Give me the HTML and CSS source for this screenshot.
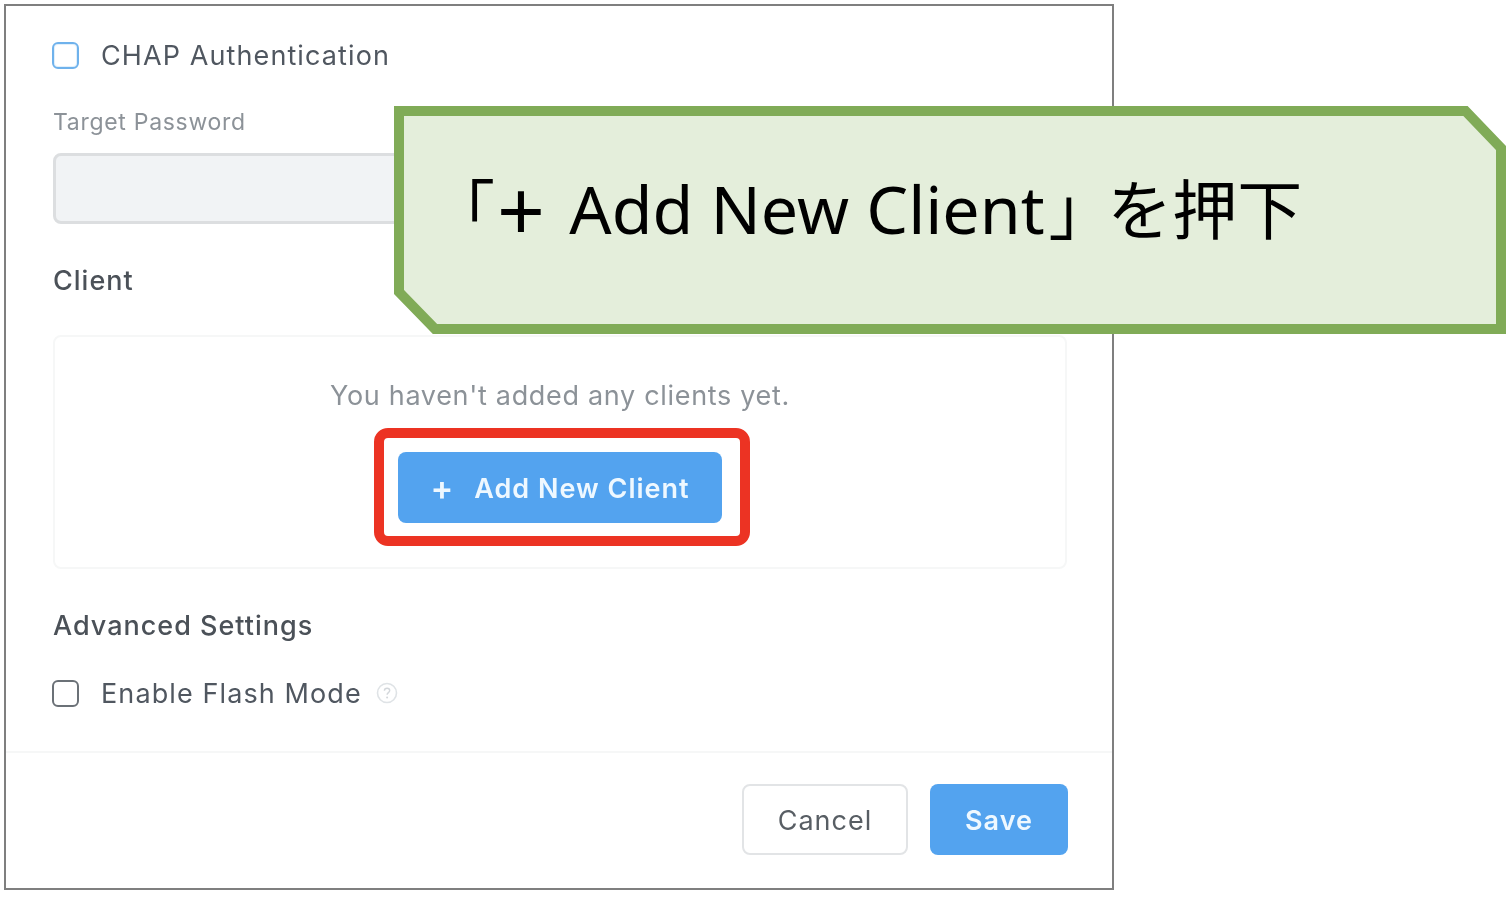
FILE: index.html
```html
<!DOCTYPE html>
<html lang="ja">
<head>
<meta charset="utf-8">
<title>Add New Client</title>
<link rel="stylesheet" href="styles.css">
</head>
<body>
<main class="panel">
  <div class="form">
    <label class="check-row">
      <span class="box box-focus"></span>
      <span class="check-label">CHAP Authentication</span>
    </label>
    <div class="field-label">Target Password</div>
    <div class="input"></div>
    <div class="section-title client-title">Client</div>
    <div class="client-card">
      <p class="empty">You haven't added any clients yet.</p>
      <div class="highlight">
        <button class="btn btn-primary btn-add"><span class="plus">+</span><span class="btn-text">Add New Client</span></button>
      </div>
    </div>
    <div class="section-title adv-title">Advanced Settings</div>
    <label class="check-row flash-row">
      <span class="box"></span>
      <span class="check-label">Enable Flash Mode</span>
      <svg class="help" viewBox="0 0 22 22" width="22" height="22" aria-hidden="true">
        <circle cx="11" cy="11" r="9.5" fill="none" stroke="#dfe3e6" stroke-width="1.6"/>
        <path d="M8.4 8.8c0-1.5 1.2-2.5 2.7-2.5s2.6 1 2.6 2.3c0 2.1-2.6 2-2.6 4.2" fill="none" stroke="#d3d7db" stroke-width="1.4"/>
        <circle cx="11.1" cy="15.6" r="1" fill="#d3d7db"/>
      </svg>
    </label>
  </div>
  <footer class="footer">
    <button class="btn btn-cancel"><span class="btn-text">Cancel</span></button>
    <button class="btn btn-primary btn-save"><span class="btn-text">Save</span></button>
  </footer>
  <aside class="callout">
    <svg class="callout-shape" viewBox="0 0 1112 228" width="1112" height="228" aria-hidden="true">
      <polygon points="5,5 1071.5,5 1107,42 1107,223 41,223 5,186" fill="#e4eedb" stroke="#80ab57" stroke-width="10"/>
    </svg>
    <p class="callout-text"><span class="bracket-open">「</span><span class="plus-big">+</span><span class="latin"> Add New Client</span><span class="bracket-close">」</span><span class="cjk">を押下</span></p>
  </aside>
</main>
</body>
</html>
```
FILE: styles.css
```css
* { box-sizing: border-box; }
html, body { margin: 0; padding: 0; background: #fff; }
body { width: 1512px; height: 898px; overflow: hidden; font-family: Inter, "Open Sans", sans-serif; }
.panel {
  position: relative;
  width: 1110px;
  height: 886px;
  margin: 4px 0 0 4px;
  border: 2px solid #7f7f7f;
  display: flex;
  flex-direction: column;
  justify-content: space-between;
}
.form { padding: 33px 45px 0 47px; display: flex; flex-direction: column; align-items: flex-start; }
.check-row { display: flex; align-items: center; height: 32px; color: #505760; font-size: 27px; letter-spacing: 1.1px; }
.box { width: 27px; height: 27px; margin-left: -1px; border: 2px solid #6b7177; border-radius: 6px; margin-right: 22px; flex: none; filter: blur(.4px); }
.box-focus { border-color: #6fb2ec; box-shadow: inset 0 0 0 1px #e2f0fb; }
.check-label, .field-label, .section-title, .empty, .btn-text, .plus, .help { filter: blur(.7px); }
.field-label { margin-top: 36px; height: 30px; line-height: 30px; font-size: 23px; letter-spacing: .7px; color: #8c9298; }
.input { margin-top: 16px; width: 1010px; height: 71px; background: #f1f3f5; border: 3px solid #dcdee0; border-radius: 8px; filter: blur(.5px); }
.section-title { font-size: 27px; line-height: 34px; letter-spacing: 1px; color: #4b5158; font-weight: 500; }
.client-title { margin-top: 40px; }
.client-card {
  margin-top: 37px;
  width: 1014px;
  height: 234px;
  border: 2px solid #f6f7f7;
  border-radius: 8px;
  display: flex;
  flex-direction: column;
  align-items: center;
}
.empty { margin: 41px 0 0; font-size: 27px; line-height: 36px; letter-spacing: .68px; color: #8c9298; white-space: nowrap; }
.highlight {
  margin-top: 14px;
  margin-left: 4px;
  width: 376px;
  height: 118px;
  border: 10px solid #ec3323;
  border-radius: 14px;
  display: flex;
  align-items: center;
  justify-content: center;
}
.btn { font-family: inherit; font-size: 27px; letter-spacing: 1px; border-radius: 8px; padding: 2px 0 0; }
.btn-primary { background: #53a3ef; border: 0; color: #eef8ff; font-weight: 600; }
.btn-add { width: 324px; height: 71px; margin-right: 4px; display: flex; align-items: center; justify-content: center; }
.plus { margin-right: 20px; font-size: 34px; line-height: 1; }
.adv-title { margin-top: 40px; }
.flash-row { margin-top: 34px; }
.help { margin-left: 14px; }
.footer {
  height: 137px;
  border-top: 2px solid #f6f7f7;
  display: flex;
  justify-content: flex-end;
  gap: 22px;
  padding: 31px 44px 0 0;
}
.btn-cancel { width: 166px; height: 71px; background: #fff; border: 2px solid #e2e4e6; color: #585e64; }
.btn-save { width: 138px; height: 71px; }
.callout { position: absolute; left: 388px; top: 100px; width: 1112px; height: 228px; }
.callout-shape { position: absolute; left: 0; top: 0; display: block; }
.callout-text {
  position: absolute;
  left: 36px;
  top: 55px;
  margin: 0;
  white-space: nowrap;
  font-family: "Noto Sans CJK JP", "Noto Sans", sans-serif;
  font-size: 65px;
  line-height: 90px;
  color: #000;
}
.latin { font-family: "Noto Sans", sans-serif; font-size: 66.3px; margin-left: 7px; }
.plus-big { font-family: "Noto Sans", sans-serif; font-size: 84px; line-height: 1; vertical-align: -7px; }
.bracket-open { margin-right: 2px; }
.bracket-close { font-feature-settings: "palt"; margin-left: 5px; margin-right: 25px; }
```
